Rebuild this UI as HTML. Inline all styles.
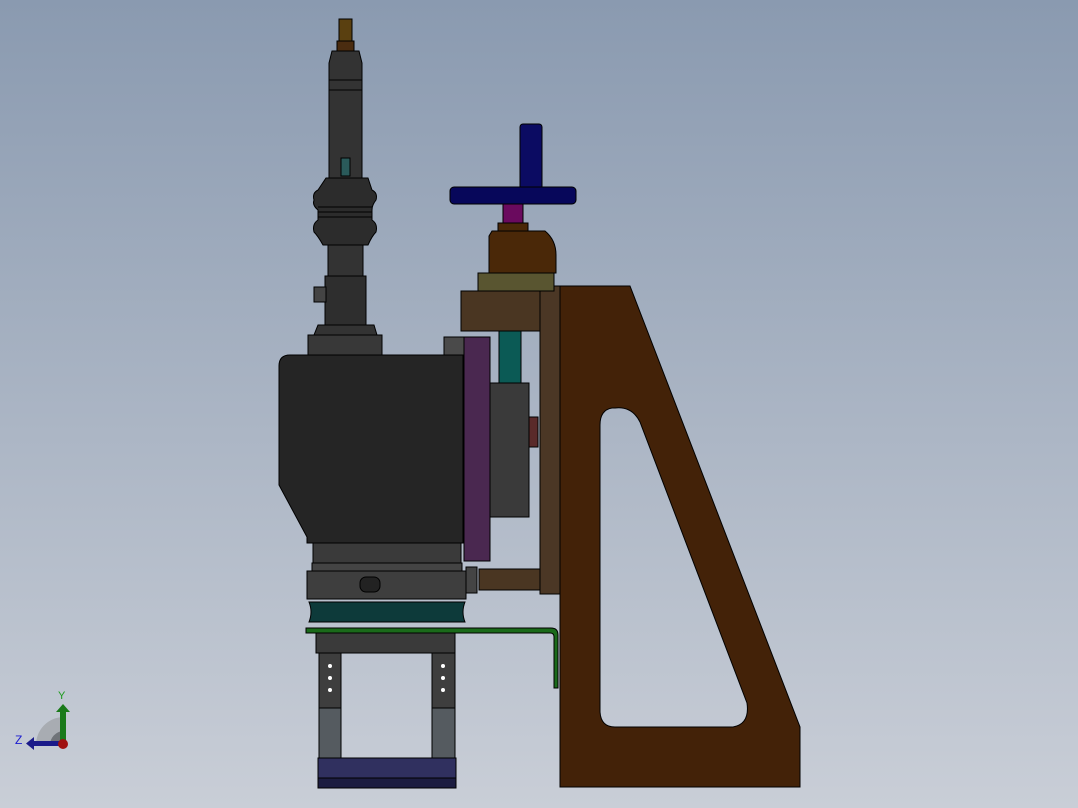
<!DOCTYPE html>
<html><head><meta charset="utf-8"><style>
html,body{margin:0;padding:0}
body{width:1078px;height:808px;overflow:hidden;background:linear-gradient(#8a9ab0,#c9ced7)}
svg{display:block}
</style></head><body>
<svg width="1078" height="808" viewBox="0 0 1078 808" xmlns="http://www.w3.org/2000/svg" stroke="#000" stroke-width="1">
<!-- right bracket -->
<path d="M560 286 L630 286 L800 727 L800 787 L560 787 Z M612 408 Q600 410 600 425 L600 712 Q601 727 615 727 L733 727 Q750 724 747 703 L640 422 Q632 406 615 408 Z" fill="#432208" fill-rule="evenodd"/>
<rect x="540" y="286" width="20" height="308" fill="#4b3725"/>
<!-- handle -->
<rect x="520" y="124" width="22" height="66" rx="3" fill="#0b0b62"/>
<rect x="450" y="187" width="126" height="17" rx="4" fill="#07075a"/>
<rect x="503" y="204" width="20" height="19" fill="#6a0a5e"/>
<rect x="498" y="223" width="30" height="8" fill="#4a2808"/>
<path d="M492 231 L545 231 Q556 240 556 255 L556 273 L489 273 L489 236 Z" fill="#4a2808"/>
<rect x="478" y="273" width="76" height="18" fill="#595530"/>
<rect x="461" y="291" width="79" height="40" fill="#4a3622"/>
<rect x="499" y="331" width="22" height="186" fill="#0b5a55"/>
<rect x="464" y="337" width="26" height="224" fill="#4a2850"/>
<rect x="444" y="337" width="20" height="18" fill="#4a4a4a"/>
<rect x="490" y="383" width="39" height="134" fill="#3a3a3a"/>
<rect x="529" y="417" width="9" height="30" fill="#5a2a2a"/>
<rect x="479" y="569" width="61" height="21" fill="#4a3622"/>
<!-- top torch -->
<rect x="339" y="19" width="13" height="22" fill="#5a4010"/>
<rect x="337" y="41" width="17" height="10" fill="#4a2c10"/>
<path d="M332 51 L359 51 L362 63 L362 178 L329 178 L329 63 Z" fill="#333"/>
<line x1="329" y1="80" x2="362" y2="80"/><line x1="329" y1="90" x2="362" y2="90"/>
<rect x="341" y="158" width="9" height="18" fill="#2a5a5a"/>
<path d="M326 178 L368 178 L372 190 Q378 193 376 200 Q372 205 372 210 L372 220 Q378 224 376 232 Q372 236 368 245 L323 245 Q318 236 314 232 Q312 224 318 220 L318 210 Q312 205 314 200 Q312 193 318 190 Z" fill="#2c2c2c"/>
<line x1="318" y1="207" x2="372" y2="207"/><line x1="318" y1="212" x2="372" y2="212"/><line x1="318" y1="217" x2="372" y2="217"/>
<rect x="328" y="245" width="35" height="32" fill="#333"/>
<rect x="325" y="276" width="41" height="49" fill="#2e2e2e"/>
<rect x="314" y="287" width="12" height="15" fill="#444"/>
<path d="M318 325 L374 325 L377 335 L314 335 Z" fill="#333"/>
<rect x="308" y="335" width="74" height="20" fill="#383838"/>
<!-- main body -->
<path d="M290 355 L463 355 L463 543 L307 543 L307 537 L279 485 L279 366 Q279 355 290 355 Z" fill="#252525"/>
<rect x="313" y="543" width="148" height="20" fill="#3a3a3a"/>
<rect x="312" y="563" width="150" height="8" fill="#444"/>
<rect x="466" y="567" width="11" height="26" fill="#444"/>
<rect x="307" y="571" width="159" height="28" fill="#3e3e3e"/>
<rect x="360" y="577" width="20" height="15" rx="6" fill="#222"/>
<path d="M309 602 L465 602 Q461 612 465 622 L309 622 Q313 612 309 602 Z" fill="#0d3a3a"/>
<!-- legs -->
<rect x="316" y="633" width="139" height="20" fill="#3a3a3a"/>
<rect x="319" y="653" width="22" height="55" fill="#3e3e3e"/>
<rect x="432" y="653" width="23" height="55" fill="#3e3e3e"/>
<rect x="319" y="708" width="22" height="65" fill="#555b60"/>
<rect x="432" y="708" width="23" height="65" fill="#555b60"/>
<g fill="#fff" stroke="none">
<circle cx="330" cy="666" r="2"/><circle cx="330" cy="678" r="2"/><circle cx="330" cy="690" r="2"/>
<circle cx="443" cy="666" r="2"/><circle cx="443" cy="678" r="2"/><circle cx="443" cy="690" r="2"/></g>
<rect x="318" y="758" width="138" height="20" fill="#30305f"/>
<rect x="318" y="778" width="138" height="10" fill="#1c1c40"/>
<!-- pipe -->
<path d="M306 628 L551 628 Q558 628 558 635 L558 688 L554 688 L554 637 Q554 633 550 633 L306 633 Z" fill="#1a6a1a"/>
<!-- triad -->
<g stroke="none">
<path d="M36 745 A28 28 0 0 1 63 717 L63 745 Z" fill="#a8acb2"/>
<path d="M50 745 A14 14 0 0 1 63 731 L63 745 Z" fill="#6f7378"/>
<rect x="60" y="711" width="6" height="32" fill="#1a7a1a"/>
<path d="M56 712 L63 704 L70 712 Z" fill="#1a7a1a"/>
<rect x="33" y="741" width="28" height="5" fill="#1a1a8a"/>
<path d="M34 737 L26 743.5 L34 750 Z" fill="#1a1a8a"/>
<circle cx="63" cy="744" r="5" fill="#a01010"/>
</g>
<text x="58" y="699" font-family="Liberation Sans,sans-serif" font-size="11" fill="#1a9a1a" stroke="none">Y</text>
<text x="15" y="744" font-family="Liberation Sans,sans-serif" font-size="12" fill="#1a1ad0" stroke="none">Z</text>
</svg>
</body></html>
